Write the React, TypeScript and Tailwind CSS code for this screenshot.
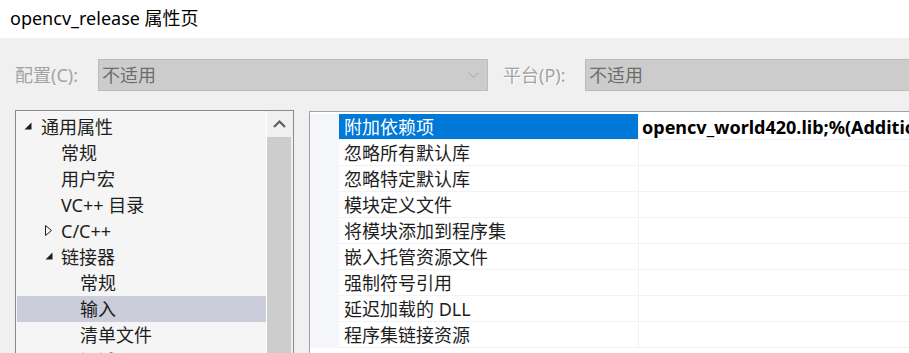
import React from "react";

const ExpandedTri = () => (
  <svg width="8" height="8" viewBox="0 0 8 8" className="block">
    <polygon points="7.5,0.5 7.5,7.5 0.5,7.5" fill="#1e1e1e" />
  </svg>
);

const CollapsedTri = () => (
  <svg width="8" height="11" viewBox="0 0 8 11" className="block">
    <polygon points="0.5,0.5 6.5,5.5 0.5,10.5" fill="none" stroke="#1e1e1e" strokeWidth="1" />
  </svg>
);

type TreeRow = { label: string; kind: "l0" | "l1t" | "l1c" | "l1" | "l2"; selected?: boolean };

const treeRows: TreeRow[] = [
  { label: "通用属性", kind: "l0" },
  { label: "常规", kind: "l1" },
  { label: "用户宏", kind: "l1" },
  { label: "VC++ 目录", kind: "l1" },
  { label: "C/C++", kind: "l1c" },
  { label: "链接器", kind: "l1t" },
  { label: "常规", kind: "l2" },
  { label: "输入", kind: "l2", selected: true },
  { label: "清单文件", kind: "l2" },
  { label: "调试", kind: "l2" },
];

const props = [
  "附加依赖项",
  "忽略所有默认库",
  "忽略特定默认库",
  "模块定义文件",
  "将模块添加到程序集",
  "嵌入托管资源文件",
  "强制符号引用",
  "延迟加载的 DLL",
  "程序集链接资源",
];

function Tree() {
  return (
    <div className="w-[250px] shrink-0 pt-[3px] pl-[1px] overflow-hidden">
      {treeRows.map((r, i) => (
        <div
          key={i}
          className={
            "h-[26px] flex items-center whitespace-nowrap " +
            (r.selected ? "bg-[#cbcdda]" : "")
          }
        >
          {r.kind === "l0" && (
            <>
              <div className="ml-[7px] w-[17px] shrink-0 flex items-center pb-[3px]">
                <ExpandedTri />
              </div>
              <span className="leading-none">{r.label}</span>
            </>
          )}
          {r.kind === "l1t" && (
            <>
              <div className="ml-[28px] w-[16px] shrink-0 flex items-center pb-[3px]">
                <ExpandedTri />
              </div>
              <span className="leading-none">{r.label}</span>
            </>
          )}
          {r.kind === "l1c" && (
            <>
              <div className="ml-[28px] w-[16px] shrink-0 flex items-center pb-[1px]">
                <CollapsedTri />
              </div>
              <span className="leading-none">{r.label}</span>
            </>
          )}
          {r.kind === "l1" && <span className="ml-[44px] leading-none">{r.label}</span>}
          {r.kind === "l2" && <span className="ml-[63px] leading-none">{r.label}</span>}
        </div>
      ))}
    </div>
  );
}

export default function App() {
  return (
    <div className="w-[909px] h-[353px] overflow-hidden bg-[#f0f0f0] flex flex-col text-[18px] text-[#1e1e1e] font-['Noto_Sans','Noto_Sans_CJK_SC',sans-serif]">
      <div className="h-[38px] shrink-0 bg-white flex items-center pl-[10px] text-black">
        <span className="leading-none pb-[2px]">opencv_release 属性页</span>
      </div>

      <div className="mt-[21px] h-[32px] shrink-0 flex items-center whitespace-nowrap">
        <span className="ml-[15px] w-[83px] shrink-0 leading-none text-[#a3a3a3]">配置(C):</span>
        <div className="w-[390px] h-[32px] shrink-0 bg-[#cccccc] border border-[#bcbcbc] flex items-center pl-[3px] text-[#6d6d6d]">
          <span className="leading-none">不适用</span>
          <svg width="11" height="7" viewBox="0 0 11 7" className="ml-auto mr-[8px]">
            <polyline points="0.5,0.5 5.5,5.5 10.5,0.5" fill="none" stroke="#a8a8a8" strokeWidth="1" />
          </svg>
        </div>
        <span className="ml-[15px] w-[82px] shrink-0 leading-none text-[#a3a3a3] [text-shadow:1px_1px_0_#ffffff]">平台(P):</span>
        <div className="w-[340px] h-[32px] shrink-0 bg-[#cccccc] border border-[#bcbcbc] flex items-center pl-[3px] text-[#6d6d6d]">
          <span className="leading-none">不适用</span>
        </div>
      </div>

      <div className="mt-[19px] flex items-start shrink-0">
        <div className="ml-[15px] w-[279px] h-[260px] shrink-0 border border-[#8a8b92] bg-[#f5f5f5] flex">
          <Tree />
          <div className="w-[1px] shrink-0 bg-white" />
          <div className="w-[26px] shrink-0 bg-[#f0f0f0] flex flex-col">
            <div className="h-[26px] flex items-center justify-center pr-[2px]">
              <svg width="13" height="8" viewBox="0 0 13 8">
                <polyline points="1,7 6.5,1.5 12,7" fill="none" stroke="#606060" strokeWidth="2.2" />
              </svg>
            </div>
            <div className="w-[24px] flex-1 bg-[#cdcdcd]" />
          </div>
        </div>

        <div className="ml-[15px] mt-[1px] w-[620px] h-[260px] shrink-0 border-l border-t border-[#a0a0a8] bg-white pt-[2px]">
          {props.map((p, i) => (
            <div key={i} className="h-[26px] flex whitespace-nowrap">
              <div className="w-[29px] shrink-0 bg-[#f4f6fa]" />
              <div
                className={
                  "w-[299px] shrink-0 flex items-center pl-[5px] border-b " +
                  (i === 0 ? "bg-[#0078d7] text-white border-[#f0f2f6]" : "border-[#f0f2f6]")
                }
              >
                <span className="leading-none">{p}</span>
              </div>
              <div className="flex-1 flex items-center pl-[3px] border-l border-b border-[#f0f2f6] overflow-hidden">
                {i === 0 && <span className="leading-none font-bold text-black">opencv_world420.lib;%(AdditionalDependencies)</span>}
              </div>
            </div>
          ))}
        </div>
      </div>
    </div>
  );
}
